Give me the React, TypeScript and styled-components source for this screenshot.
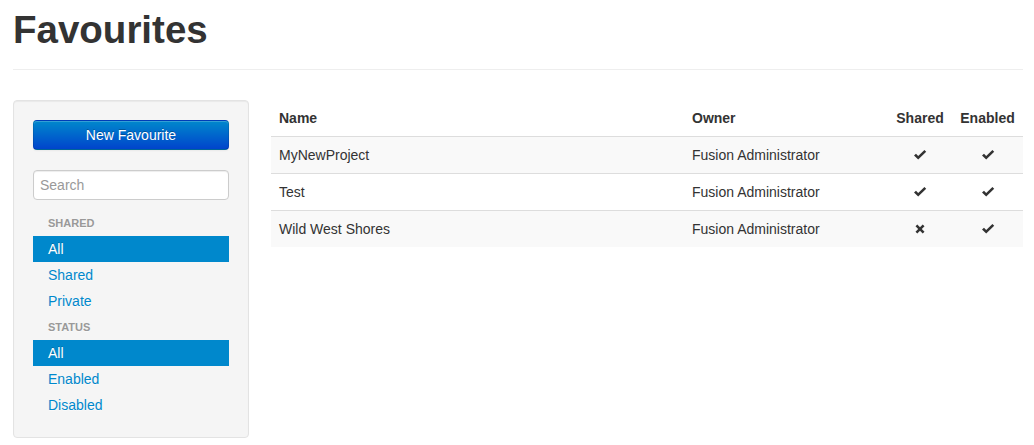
import React from "react";
import styled, { createGlobalStyle } from "styled-components";

const GlobalStyle = createGlobalStyle`
  html, body { margin: 0; padding: 0; background: #ffffff; }
  body {
    font-family: "Liberation Sans", Arial, Helvetica, sans-serif;
    font-size: 14px;
    line-height: 20px;
    color: #333333;
  }
  * { box-sizing: border-box; }
`;

const Container = styled.div`
  width: 1010px;
  margin-left: 13px;
`;

const PageHeader = styled.div`
  margin: 0 0 30px;
  padding-bottom: 9px;
  border-bottom: 1px solid #eeeeee;
`;

const Title = styled.h1`
  margin: 10px 0;
  font-size: 38.5px;
  line-height: 40px;
  font-weight: bold;
  color: #333333;
`;

const Row = styled.div`
  display: grid;
  grid-template-columns: 236px 752px;
  column-gap: 22px;
  align-items: start;
`;

const Well = styled.div`
  background: #f5f5f5;
  border: 1px solid #e3e3e3;
  border-radius: 4px;
  box-shadow: inset 0 1px 1px rgba(0, 0, 0, 0.05);
  padding: 19px;
  display: flex;
  flex-direction: column;
`;

const PrimaryButton = styled.button`
  display: block;
  width: 100%;
  height: 30px;
  padding: 4px 12px;
  font-family: inherit;
  font-size: 14px;
  line-height: 20px;
  color: #ffffff;
  text-align: center;
  text-shadow: 0 -1px 0 rgba(0, 0, 0, 0.25);
  background: linear-gradient(to bottom, #0088cc, #0044cc);
  border: 1px solid;
  border-color: rgba(0, 0, 0, 0.1) rgba(0, 0, 0, 0.1) rgba(0, 0, 0, 0.25);
  border-radius: 4px;
  box-shadow: inset 0 1px 0 rgba(255, 255, 255, 0.2), 0 1px 2px rgba(0, 0, 0, 0.05);
  cursor: pointer;
`;

const SearchInput = styled.input`
  display: block;
  width: 100%;
  height: 30px;
  margin: 20px 0 10px;
  padding: 4px 6px;
  font-family: inherit;
  font-size: 14px;
  line-height: 20px;
  color: #555555;
  background: #ffffff;
  border: 1px solid #cccccc;
  border-radius: 4px;
  box-shadow: inset 0 1px 1px rgba(0, 0, 0, 0.075);
  outline: none;
  &::placeholder { color: #999999; }
`;

const NavList = styled.ul`
  list-style: none;
  margin: 0;
  padding: 0;
`;

const NavHeader = styled.li`
  padding: 3px 15px;
  font-size: 11px;
  font-weight: bold;
  line-height: 20px;
  color: #999999;
  text-transform: uppercase;
  text-shadow: 0 1px 0 rgba(255, 255, 255, 0.5);
`;

const NavLink = styled.a<{ $active?: boolean }>`
  display: block;
  padding: 3px 15px;
  line-height: 20px;
  text-decoration: none;
  color: ${(p) => (p.$active ? "#ffffff" : "#0088cc")};
  background: ${(p) => (p.$active ? "#0088cc" : "transparent")};
  text-shadow: ${(p) =>
    p.$active ? "0 -1px 0 rgba(0, 0, 0, 0.2)" : "0 1px 0 rgba(255, 255, 255, 0.5)"};
`;

const Table = styled.table`
  width: 752px;
  border-collapse: collapse;
  border-spacing: 0;
  table-layout: fixed;
`;

const Th = styled.th<{ $center?: boolean }>`
  padding: 8px;
  line-height: 20px;
  text-align: ${(p) => (p.$center ? "center" : "left")};
  vertical-align: bottom;
  font-weight: bold;
  white-space: nowrap;
`;

const Tr = styled.tr<{ $striped?: boolean }>`
  background: ${(p) => (p.$striped ? "#f9f9f9" : "transparent")};
`;

const Td = styled.td<{ $center?: boolean }>`
  padding: 8px;
  line-height: 20px;
  text-align: ${(p) => (p.$center ? "center" : "left")};
  vertical-align: top;
  border-top: 1px solid #dddddd;
`;

const IconWrap = styled.span`
  display: inline-block;
  width: 14px;
  height: 14px;
  vertical-align: -2px;
`;

const CheckIcon = () => (
  <IconWrap>
    <svg width="14" height="14" viewBox="0 0 14 14">
      <path
        d="M1 7.6 L3 5.8 L5.2 8 L11.4 2 L13.2 3.8 L5.2 11.6 Z"
        fill="#333333"
      />
    </svg>
  </IconWrap>
);

const RemoveIcon = () => (
  <IconWrap>
    <svg width="14" height="14" viewBox="0 0 14 14">
      <path
        d="M2.5 4.3 L4.3 2.5 L7 5.2 L9.7 2.5 L11.5 4.3 L8.8 7 L11.5 9.7 L9.7 11.5 L7 8.8 L4.3 11.5 L2.5 9.7 L5.2 7 Z"
        fill="#333333"
      />
    </svg>
  </IconWrap>
);

const rows = [
  { name: "MyNewProject", owner: "Fusion Administrator", shared: true, enabled: true },
  { name: "Test", owner: "Fusion Administrator", shared: true, enabled: true },
  { name: "Wild West Shores", owner: "Fusion Administrator", shared: false, enabled: true },
];

export default function App() {
  return (
    <>
      <GlobalStyle />
      <Container>
        <PageHeader>
          <Title>Favourites</Title>
        </PageHeader>
        <Row>
          <Well>
            <PrimaryButton>New Favourite</PrimaryButton>
            <SearchInput placeholder="Search" />
            <NavList>
              <NavHeader>Shared</NavHeader>
              <li><NavLink href="#" $active>All</NavLink></li>
              <li><NavLink href="#">Shared</NavLink></li>
              <li><NavLink href="#">Private</NavLink></li>
              <NavHeader>Status</NavHeader>
              <li><NavLink href="#" $active>All</NavLink></li>
              <li><NavLink href="#">Enabled</NavLink></li>
              <li><NavLink href="#">Disabled</NavLink></li>
            </NavList>
          </Well>
          <Table>
            <colgroup>
              <col style={{ width: 413 }} />
              <col style={{ width: 204 }} />
              <col style={{ width: 64 }} />
              <col style={{ width: 71 }} />
            </colgroup>
            <thead>
              <tr>
                <Th>Name</Th>
                <Th>Owner</Th>
                <Th $center>Shared</Th>
                <Th $center>Enabled</Th>
              </tr>
            </thead>
            <tbody>
              {rows.map((r, i) => (
                <Tr key={r.name} $striped={i % 2 === 0}>
                  <Td>{r.name}</Td>
                  <Td>{r.owner}</Td>
                  <Td $center>{r.shared ? <CheckIcon /> : <RemoveIcon />}</Td>
                  <Td $center>{r.enabled ? <CheckIcon /> : <RemoveIcon />}</Td>
                </Tr>
              ))}
            </tbody>
          </Table>
        </Row>
      </Container>
    </>
  );
}
